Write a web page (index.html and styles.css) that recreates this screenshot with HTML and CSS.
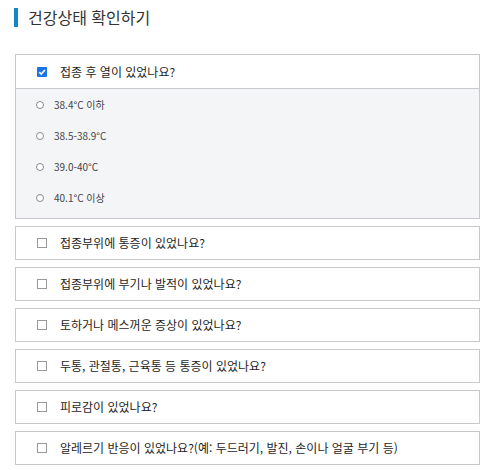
FILE: index.html
```html
<!DOCTYPE html>
<html lang="ko">
<head>
<meta charset="utf-8">
<link rel="stylesheet" href="styles.css">
</head>
<body>
<div class="page">
  <h2 class="title"><span class="bar"></span>건강상태 확인하기</h2>
  <div class="list">
    <div class="card open">
      <div class="q"><span class="cb checked"><svg viewBox="0 0 10 10" width="10" height="10"><path d="M2.2 5.2 L4.2 7.1 L7.9 3" fill="none" stroke="#fff" stroke-width="1.6"/></svg></span><span class="qt">접종 후 열이 있었나요?</span></div>
      <div class="opts">
        <div class="opt"><span class="rd"></span><span>38.4°C 이하</span></div>
        <div class="opt"><span class="rd"></span><span>38.5-38.9°C</span></div>
        <div class="opt"><span class="rd"></span><span>39.0-40°C</span></div>
        <div class="opt"><span class="rd"></span><span>40.1°C 이상</span></div>
      </div>
    </div>
    <div class="card"><div class="q"><span class="cb"></span><span class="qt">접종부위에 통증이 있었나요?</span></div></div>
    <div class="card"><div class="q"><span class="cb"></span><span class="qt">접종부위에 부기나 발적이 있었나요?</span></div></div>
    <div class="card"><div class="q"><span class="cb"></span><span class="qt">토하거나 메스꺼운 증상이 있었나요?</span></div></div>
    <div class="card"><div class="q"><span class="cb"></span><span class="qt">두통, 관절통, 근육통 등 통증이 있었나요?</span></div></div>
    <div class="card"><div class="q"><span class="cb"></span><span class="qt">피로감이 있었나요?</span></div></div>
    <div class="card"><div class="q"><span class="cb"></span><span class="qt">알레르기 반응이 있었나요?(예: 두드러기, 발진, 손이나 얼굴 부기 등)</span></div></div>
  </div>
</div>
</body>
</html>
```
FILE: styles.css
```css
html, body { margin: 0; padding: 0; background: #fff; }
body { font-family: "Noto Sans CJK KR", "Noto Sans", sans-serif; color: #222; }
.page { padding: 8px 4px 0 15px; }
.title {
  margin: 0; display: flex; align-items: center; gap: 10px;
  font-size: 16px; font-weight: 400; color: #333; height: 19px; line-height: 19px;
  margin-left: -1px;
}
.bar { width: 4px; height: 19px; background: #1487c9; display: block; }
.list { margin-top: 27px; display: flex; flex-direction: column; gap: 7px; }
.card { border: 1px solid #c9c9cd; background: #fff; }
.q { height: 32px; display: flex; align-items: center; padding-left: 21px; gap: 13px; font-size: 12px; color: #1e1e1e; }
.open .q { height: 33px; border-bottom: 1px solid #c9c9cd; }
.qt { line-height: 1; }
.cb { width: 10px; height: 10px; border: 1px solid #999; background: #fff; box-sizing: border-box; display: block; flex: none; }
.cb.checked { width: 10px; height: 10px; border: none; background: #1a73e8; border-radius: 1px; }
.cb svg { display: block; }
.opts { background: #f4f5f7; padding: 0 0 5px 0; }
.opt { height: 31px; display: flex; align-items: center; padding-left: 20px; gap: 10px; font-size: 10px; color: #444; }
.rd { width: 8px; height: 8px; border: 1px solid #8a8a8a; border-radius: 50%; box-sizing: border-box; background: #fff; flex: none; }
```
